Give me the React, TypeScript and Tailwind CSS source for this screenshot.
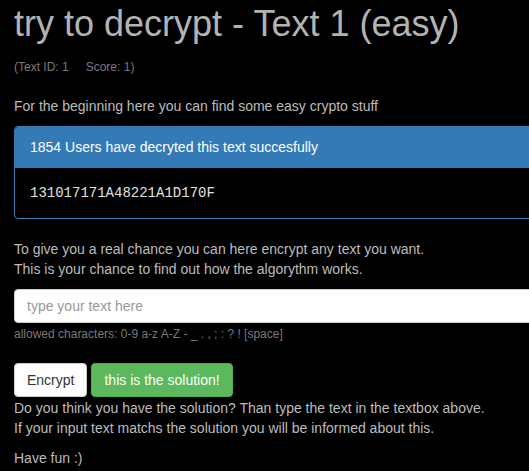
import React from 'react';

export default function App() {
  return (
    <div className="w-[529px] h-[471px] overflow-hidden bg-black font-['Liberation_Sans',Arial,sans-serif] text-[14px] leading-[20px] text-[#bcbcbc]">
      <div className="w-[600px] pl-[14px] pr-[20px]">
        {/* Title */}
        <h1 className="mt-[4px] text-[36px] leading-[39.6px] text-[#b3b3b3]">
          try to decrypt - Text 1 (easy)
        </h1>
        <div className="mt-[15px] text-[12px] leading-[16px] text-[#7a7a7a]">
          (Text ID: 1<span className="inline-block w-[17px]" />Score: 1)
        </div>

        <p className="mt-[21px]">For the beginning here you can find some easy crypto stuff</p>

        {/* Decrypt panel */}
        <div className="mt-[10px] rounded-[4px] border border-[#337ab7] overflow-hidden">
          <div className="bg-[#337ab7] px-[15px] py-[10px] text-white leading-[21px]">
            1854 Users have decryted this text succesfully
          </div>
          <div className="p-[15px] font-['Courier_New','Liberation_Mono',monospace] text-[#e0e0e0]">
            131017171A48221A1D170F
          </div>
        </div>

        <p className="mt-[20px]">
          To give you a real chance you can here encrypt any text you want.
          <br />
          This is your chance to find out how the algorythm works.
        </p>

        {/* Encrypt form */}
        <input
          type="text"
          placeholder="type your text here"
          className="mt-[10px] block w-full h-[34px] rounded-[4px] border border-[#cccccc] bg-white px-[12px] text-[14px] text-[#555] placeholder:text-[#999] outline-none"
        />
        <div className="mt-[3px] text-[12px] leading-[17px] text-[#7a7a7a]">
          allowed characters: 0-9 a-z A-Z - _ . , ; : ? ! [space]
        </div>

        <div className="mt-[20px] flex gap-[4px]">
          <button className="h-[34px] rounded-[4px] border border-[#cccccc] bg-white px-[12px] text-[#333]">
            Encrypt
          </button>
          <button className="h-[34px] rounded-[4px] border border-[#4cae4c] bg-[#5cb85c] px-[12px] text-white">
            this is the solution!
          </button>
        </div>

        <p className="mt-[1px]">
          Do you think you have the solution? Than type the text in the textbox above.
          <br />
          If your input text matchs the solution you will be informed about this.
        </p>
        <p className="mt-[10px]">Have fun :)</p>
      </div>
    </div>
  );
}
